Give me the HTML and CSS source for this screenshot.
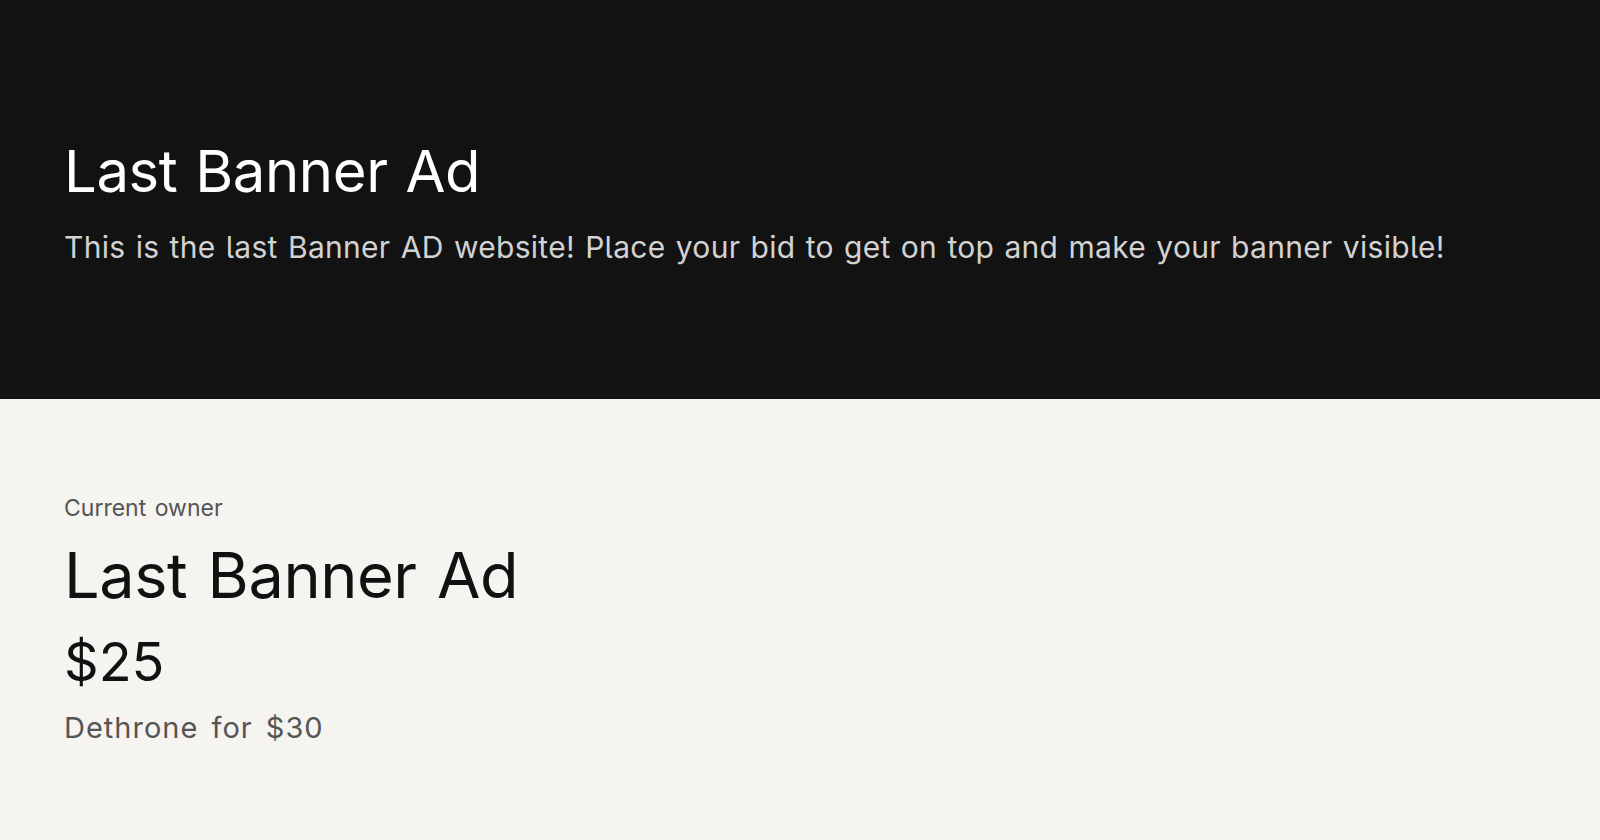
FILE: index.html
```html
<!DOCTYPE html>
<html lang="en">
<head>
    <meta charset="UTF-8">
    <meta name="viewport" content="width=device-width, initial-scale=1.0">
    <title>Last Banner Ad</title>
    <link rel="stylesheet" href="styles.css">
</head>
<body>
    <header class="hero">
        <h1 class="hero-title">Last Banner Ad</h1>
        <p class="hero-text">This is the last Banner AD website! Place your bid to get on top and make your banner visible!</p>
    </header>

    <main class="owner">
        <div class="owner-label">Current owner</div>
        <h2 class="owner-name">Last Banner Ad</h2>
        <div class="owner-price">$25</div>
        <div class="owner-next">Dethrone for $30</div>
    </main>
</body>
</html>
```

FILE: styles.css
```css
html, body {
    height: 100%;
}
body {
    font-family: Inter, 'Liberation Sans', Arial, sans-serif;
    font-feature-settings: "cv05" 1;
    margin: 0;
    background-color: #f5f4f0;
    color: #111;
    line-height: 1.2;
}
.hero {
    background-color: #121212;
    color: #fff;
    padding: 137px 64px 134px;
}
.hero-title {
    margin: 0 0 22px;
    font-size: 58px;
    font-weight: normal;
    letter-spacing: -0.4px;
    word-spacing: 2px;
}
.hero-text {
    margin: 0;
    font-size: 30px;
    color: #d2d2d2;
    letter-spacing: 0.3px;
    word-spacing: 1.5px;
}
.owner {
    display: flex;
    flex-direction: column;
    gap: 16px;
    padding: 96px 64px 40px;
}
.owner-label {
    font-size: 23px;
    color: #555;
    word-spacing: 2px;
}
.owner-name {
    margin: 0;
    font-size: 63px;
    font-weight: normal;
    letter-spacing: -0.4px;
    word-spacing: 3px;
}
.owner-price {
    font-size: 54px;
}
.owner-next {
    font-size: 29px;
    color: #555;
    letter-spacing: 1px;
    word-spacing: 4px;
}
```
